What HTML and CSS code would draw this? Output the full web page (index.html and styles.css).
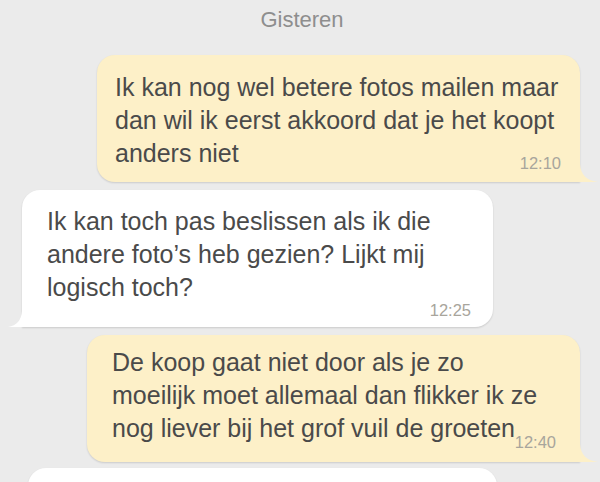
FILE: index.html
```html
<!DOCTYPE html>
<html lang="nl">
<head>
<meta charset="utf-8">
<title>Chat</title>
<link rel="stylesheet" href="styles.css">
</head>
<body>
<div class="chat">
  <div class="day">Gisteren</div>
  <div class="bubble out b1">
    <div class="text">Ik kan nog wel betere fotos mailen maar<br>dan wil ik eerst akkoord dat je het koopt<br>anders niet</div>
    <div class="time">12:10</div>
  </div>
  <div class="bubble in b2">
    <div class="text">Ik kan toch pas beslissen als ik die<br>andere foto’s heb gezien? Lijkt mij<br>logisch toch?</div>
    <div class="time">12:25</div>
  </div>
  <div class="bubble out b3">
    <div class="text">De koop gaat niet door als je zo<br>moeilijk moet allemaal dan flikker ik ze<br>nog liever bij het grof vuil de groeten</div>
    <div class="time">12:40</div>
  </div>
  <div class="bubble in b4">
    <div class="text">&nbsp;</div>
  </div>
</div>
</body>
</html>
```
FILE: styles.css
```css
html, body {
  margin: 0;
  height: 482px;
  overflow: hidden;
  background: #ebebeb;
}
.chat {
  display: flex;
  flex-direction: column;
  padding-top: 8px;
  font-family: "Liberation Sans", Arial, sans-serif;
}
.day {
  align-self: center;
  margin-left: 4px;
  font-size: 22px;
  line-height: 24px;
  color: #8e8e8e;
  margin-bottom: 23px;
}
.bubble {
  position: relative;
  box-sizing: border-box;
  border-radius: 18px;
  box-shadow: 0 1px 2px rgba(0, 0, 0, 0.14);
  color: #4a4a4a;
}
.text {
  font-size: 25px;
  line-height: 33px;
  white-space: nowrap;
}
.time {
  text-align: right;
  font-size: 16.5px;
  line-height: 18px;
  color: #a8a59c;
}
.out {
  align-self: flex-end;
  margin-right: 20px;
  background: #fdf0c8;
  border-bottom-right-radius: 0;
}
.out::after {
  content: "";
  position: absolute;
  right: -18px;
  bottom: 0;
  width: 18px;
  height: 18px;
  background: #fdf0c8;
  clip-path: path("M0 0 Q1 16 18 18 L0 18 Z");
}
.in {
  align-self: flex-start;
  background: #ffffff;
  border-bottom-left-radius: 0;
}
.in::after {
  content: "";
  position: absolute;
  left: -14px;
  bottom: 0;
  width: 14px;
  height: 16px;
  background: #ffffff;
  clip-path: path("M14 0 Q13 14 0 16 L14 16 Z");
}
.b1 {
  width: 483px;
  padding: 16px 19px 10px 18px;
}
.b1 .time { margin-top: -16px; }
.b2 {
  width: 471px;
  margin-left: 22px;
  margin-top: 8px;
  padding: 15px 22px 8px 25px;
}
.b2 .time { margin-top: -3px; }
.b3 {
  width: 493px;
  margin-top: 8px;
  padding: 11px 24px 11px 25px;
}
.b3 .time { margin-top: -12px; }
.b4 {
  width: 469px;
  margin-left: 28px;
  margin-top: 6px;
  padding: 14px 22px 40px 25px;
}
```
